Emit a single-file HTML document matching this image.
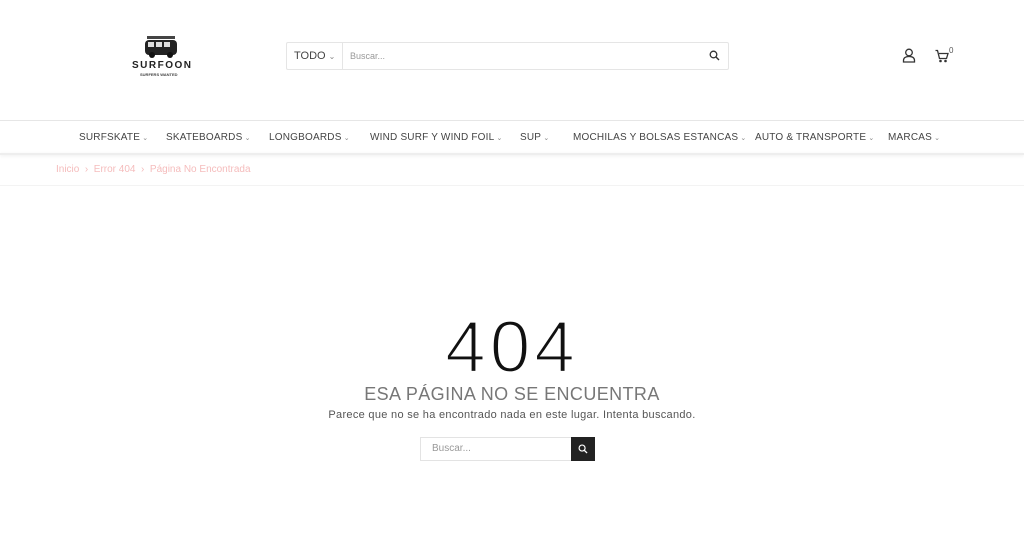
<!DOCTYPE html><html><head><meta charset="utf-8"><style>
body{margin:0;width:1024px;height:552px;background:#fff;font-family:"Liberation Sans",sans-serif;position:relative;overflow:hidden}
.a{position:absolute}
.nav span{position:absolute;top:132px;font-size:10px;color:#444;white-space:nowrap;letter-spacing:.2px}
.nav span:after{content:" \2304";font-size:7px;color:#888}
</style></head><body>
<svg class="a" style="left:143px;top:35px" width="36" height="24" viewBox="0 0 36 24"><rect x="2" y="5" width="32" height="15" rx="4" fill="#222"/><rect x="5" y="7" width="6" height="5" fill="#ddd"/><rect x="13" y="7" width="6" height="5" fill="#ddd"/><rect x="21" y="7" width="6" height="5" fill="#ddd"/><rect x="4" y="1" width="28" height="3" fill="#444"/><circle cx="9" cy="20" r="3" fill="#111"/><circle cx="27" cy="20" r="3" fill="#111"/></svg>
<div class="a" style="left:132px;top:60px;font-size:10px;font-weight:bold;letter-spacing:1.5px;color:#222">SURFOON</div>
<div class="a" style="left:140px;top:72px;font-size:4px;font-weight:bold;color:#444">SURFERS WANTED</div>
<div class="a" style="left:286px;top:42px;width:441px;height:26px;border:1px solid #e5e5e5;border-radius:2px"></div>
<div class="a" style="left:342px;top:43px;width:1px;height:26px;background:#e5e5e5"></div>
<div class="a" style="left:294px;top:50px;font-size:11px;color:#444">TODO <span style="font-size:8px;color:#888">&#8964;</span></div>
<div class="a" style="left:350px;top:51px;font-size:9px;color:#999">Buscar...</div>
<svg class="a" style="left:709px;top:50px" width="11" height="11" viewBox="0 0 11 11"><circle cx="4.5" cy="4.5" r="3.3" fill="none" stroke="#333" stroke-width="1.3"/><path d="M7 7l3 3" stroke="#333" stroke-width="1.4"/></svg>
<svg class="a" style="left:902px;top:48px" width="14" height="15" viewBox="0 0 14 15"><circle cx="7" cy="4.5" r="3.3" fill="none" stroke="#333" stroke-width="1.3"/><path d="M1.5 14v-1.5c0-2.5 2-4 5.5-4s5.5 1.5 5.5 4V14z" fill="none" stroke="#333" stroke-width="1.3"/></svg>
<svg class="a" style="left:935px;top:49px" width="14" height="14" viewBox="0 0 14 14"><path d="M0.5 1.5h2l2 8h7l1.5-5H4" fill="none" stroke="#333" stroke-width="1.3"/><circle cx="5.5" cy="12" r="1.3" fill="#333"/><circle cx="10.5" cy="12" r="1.3" fill="#333"/></svg>
<div class="a" style="left:949px;top:46px;font-size:8px;color:#555">0</div>
<div class="a" style="left:0;top:120px;width:1024px;height:1px;background:#e6e6e6"></div>
<div class="a" style="left:0;top:153px;width:1024px;height:2px;background:#eee;box-shadow:0 1px 3px rgba(0,0,0,.08)"></div>
<div class="nav">
<span style="left:79px">SURFSKATE</span><span style="left:166px">SKATEBOARDS</span><span style="left:269px">LONGBOARDS</span><span style="left:370px">WIND SURF Y WIND FOIL</span><span style="left:520px">SUP</span><span style="left:573px">MOCHILAS Y BOLSAS ESTANCAS</span><span style="left:755px">AUTO &amp; TRANSPORTE</span><span style="left:888px">MARCAS</span>
</div>
<div class="a" style="left:56px;top:164px;font-size:10px;color:#f5bcbc">Inicio &nbsp;›&nbsp; Error 404 &nbsp;›&nbsp; Página No Encontrada</div>
<div class="a" style="left:0;top:185px;width:1024px;height:1px;background:#f3f3f3"></div>
<div class="a" style="left:0;width:1024px;top:310px;text-align:center;font-size:73px;color:#111;letter-spacing:4px;line-height:76px;-webkit-text-stroke:2.2px #fff;paint-order:normal">404</div>
<div class="a" style="left:0;width:1024px;top:384px;text-align:center;font-size:18px;color:#777;line-height:20px;letter-spacing:.4px">ESA PÁGINA NO SE ENCUENTRA</div>
<div class="a" style="left:0;width:1024px;top:409px;text-align:center;font-size:11px;color:#555;letter-spacing:.3px">Parece que no se ha encontrado nada en este lugar. Intenta buscando.</div>
<div class="a" style="left:420px;top:437px;width:150px;height:22px;border:1px solid #e3e3e3"></div>
<div class="a" style="left:432px;top:443px;font-size:10px;color:#999">Buscar...</div>
<div class="a" style="left:571px;top:437px;width:24px;height:24px;background:#222"></div>
<svg class="a" style="left:578px;top:444px" width="10" height="10" viewBox="0 0 11 11"><circle cx="4.5" cy="4.5" r="3.3" fill="none" stroke="#fff" stroke-width="1.3"/><path d="M7 7l3 3" stroke="#fff" stroke-width="1.4"/></svg>
</body></html>
